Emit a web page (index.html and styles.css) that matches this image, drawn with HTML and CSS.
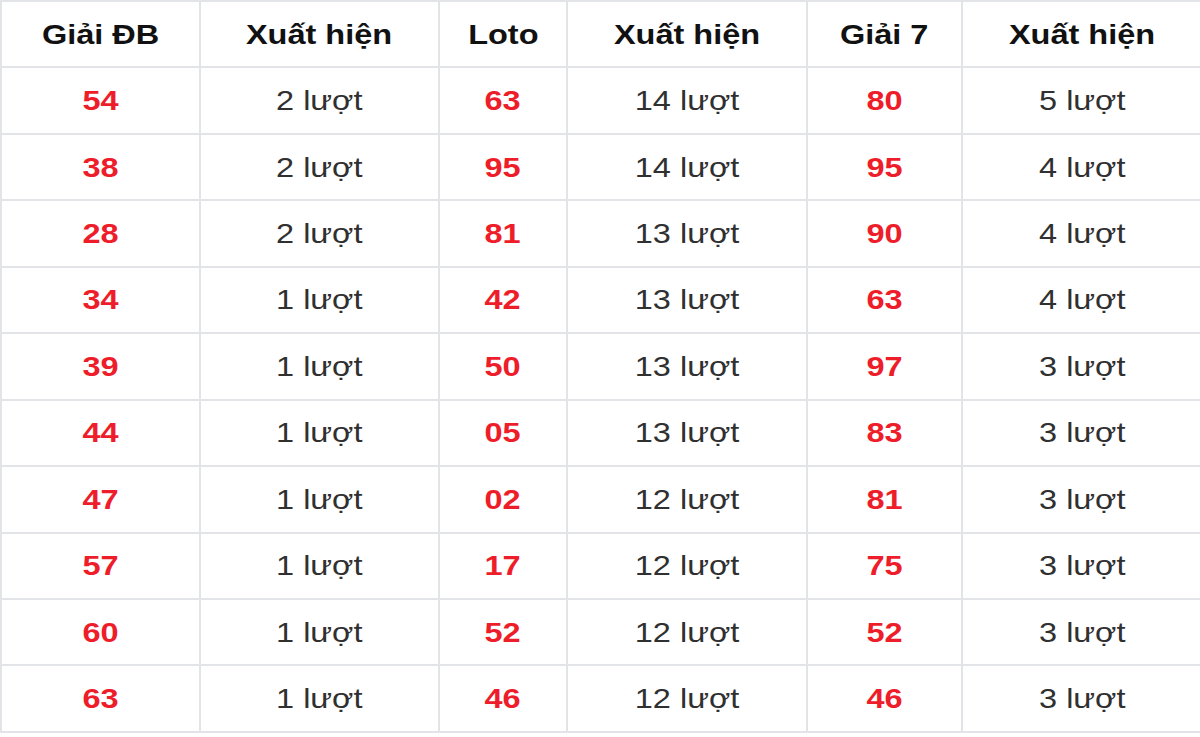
FILE: index.html
```html
<!DOCTYPE html>
<html lang="vi">
<head>
<meta charset="utf-8">
<link rel="stylesheet" href="styles.css">
</head>
<body>
<table class="stats">
  <colgroup>
    <col class="c1"><col class="c2"><col class="c3"><col class="c4"><col class="c5"><col class="c6">
  </colgroup>
  <thead>
    <tr><th><span class="t">Giải ĐB</span></th><th><span class="t">Xuất hiện</span></th><th><span class="t">Loto</span></th><th><span class="t">Xuất hiện</span></th><th><span class="t">Giải 7</span></th><th><span class="t">Xuất hiện</span></th></tr>
  </thead>
  <tbody>
    <tr><td class="num"><span class="t">54</span></td><td><span class="t">2 lượt</span></td><td class="num"><span class="t">63</span></td><td><span class="t">14 lượt</span></td><td class="num"><span class="t">80</span></td><td><span class="t">5 lượt</span></td></tr>
    <tr><td class="num"><span class="t">38</span></td><td><span class="t">2 lượt</span></td><td class="num"><span class="t">95</span></td><td><span class="t">14 lượt</span></td><td class="num"><span class="t">95</span></td><td><span class="t">4 lượt</span></td></tr>
    <tr><td class="num"><span class="t">28</span></td><td><span class="t">2 lượt</span></td><td class="num"><span class="t">81</span></td><td><span class="t">13 lượt</span></td><td class="num"><span class="t">90</span></td><td><span class="t">4 lượt</span></td></tr>
    <tr><td class="num"><span class="t">34</span></td><td><span class="t">1 lượt</span></td><td class="num"><span class="t">42</span></td><td><span class="t">13 lượt</span></td><td class="num"><span class="t">63</span></td><td><span class="t">4 lượt</span></td></tr>
    <tr><td class="num"><span class="t">39</span></td><td><span class="t">1 lượt</span></td><td class="num"><span class="t">50</span></td><td><span class="t">13 lượt</span></td><td class="num"><span class="t">97</span></td><td><span class="t">3 lượt</span></td></tr>
    <tr><td class="num"><span class="t">44</span></td><td><span class="t">1 lượt</span></td><td class="num"><span class="t">05</span></td><td><span class="t">13 lượt</span></td><td class="num"><span class="t">83</span></td><td><span class="t">3 lượt</span></td></tr>
    <tr><td class="num"><span class="t">47</span></td><td><span class="t">1 lượt</span></td><td class="num"><span class="t">02</span></td><td><span class="t">12 lượt</span></td><td class="num"><span class="t">81</span></td><td><span class="t">3 lượt</span></td></tr>
    <tr><td class="num"><span class="t">57</span></td><td><span class="t">1 lượt</span></td><td class="num"><span class="t">17</span></td><td><span class="t">12 lượt</span></td><td class="num"><span class="t">75</span></td><td><span class="t">3 lượt</span></td></tr>
    <tr><td class="num"><span class="t">60</span></td><td><span class="t">1 lượt</span></td><td class="num"><span class="t">52</span></td><td><span class="t">12 lượt</span></td><td class="num"><span class="t">52</span></td><td><span class="t">3 lượt</span></td></tr>
    <tr><td class="num"><span class="t">63</span></td><td><span class="t">1 lượt</span></td><td class="num"><span class="t">46</span></td><td><span class="t">12 lượt</span></td><td class="num"><span class="t">46</span></td><td><span class="t">3 lượt</span></td></tr>
  </tbody>
</table>
</body>
</html>
```
FILE: styles.css
```css
html, body {
  margin: 0;
  padding: 0;
  background: #ffffff;
  overflow: hidden;
}
.stats {
  border-collapse: collapse;
  table-layout: fixed;
  width: 1202px;
  font-family: "Liberation Sans", Arial, sans-serif;
  font-size: 28px;
  color: #303030;
}
.c1 { width: 199px; }
.c2 { width: 239px; }
.c3 { width: 128px; }
.c4 { width: 240px; }
.c5 { width: 155px; }
.c6 { width: 241px; }
.stats th,
.stats td {
  border: 2px solid #e2e4e8;
  height: 64.45px;
  padding: 0;
  text-align: center;
  vertical-align: middle;
}
.stats th {
  font-weight: bold;
  color: #111111;
}
.stats td.num {
  font-weight: bold;
  color: #ee1d2a;
}
.t {
  display: inline-block;
  transform: scaleX(1.16);
  padding-top: 1px;
}
```
